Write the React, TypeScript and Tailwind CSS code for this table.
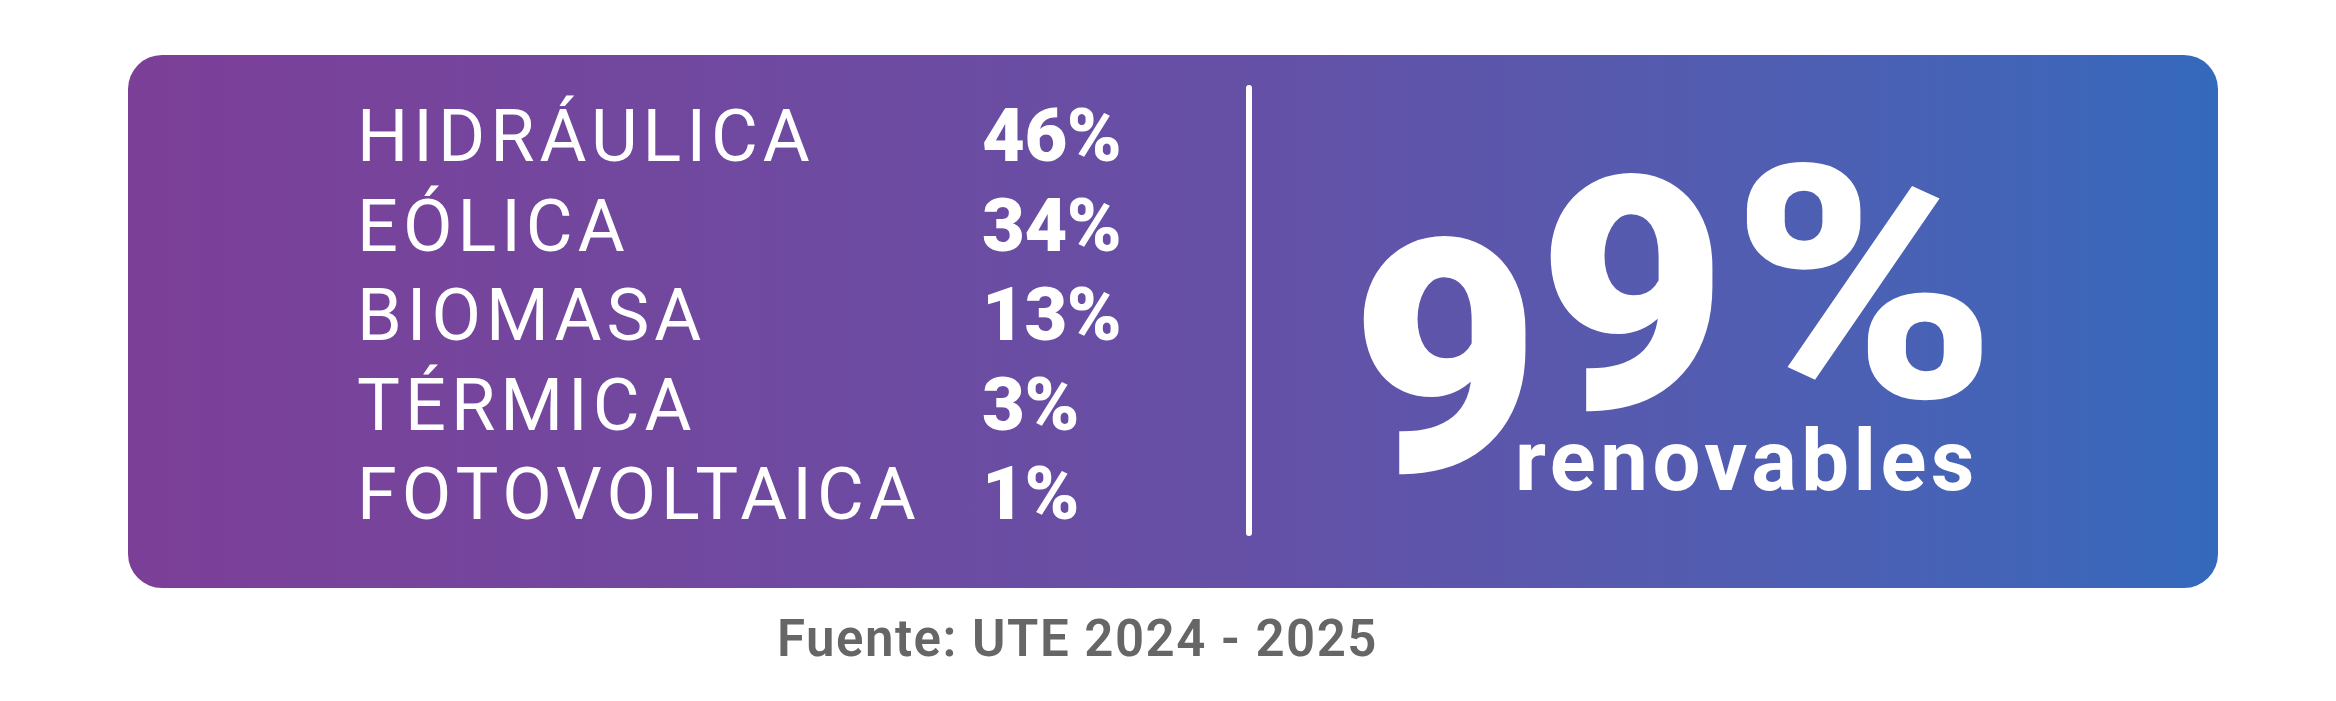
import React from 'react';

interface Row {
    label: string;
    value: string;
}

const rows: Row[] = [
    { label: 'HIDRÁULICA', value: '46%' },
    { label: 'EÓLICA', value: '34%' },
    { label: 'BIOMASA', value: '13%' },
    { label: 'TÉRMICA', value: '3%' },
    { label: 'FOTOVOLTAICA', value: '1%' },
];

const App: React.FC = () => {
    return (
        <div className="w-[2336px] h-[701px] bg-white pt-[55px] pl-[128px] font-['Roboto','Liberation_Sans',sans-serif]">
            {/* Card */}
            <div className="w-[2090px] h-[533px] rounded-[34px] bg-linear-to-r from-[#7c3f98] via-[#6450a6] via-[54%] to-[#3469bc] flex text-white">
                {/* Breakdown list */}
                <div className="w-[1118px] shrink-0 pl-[229px] pt-[36px]">
                    {rows.map((row) => (
                        <div key={row.label} className="flex items-baseline h-[89.6px] leading-[89.6px]">
                            <span className="w-[625px] shrink-0 text-[72px] font-normal tracking-[5px]">
                                {row.label}
                            </span>
                            <span className="text-[74px] font-black tracking-[-0.5px]">
                                {row.value}
                            </span>
                        </div>
                    ))}
                </div>

                {/* Divider */}
                <div className="w-[6px] h-[451px] mt-[30px] shrink-0 rounded-full bg-white" />

                {/* Total */}
                <div className="flex flex-col pl-[99px] pt-[142px]">
                    <div className="flex text-[326px] leading-none font-black tracking-[-2px]">
                        <span>9</span>
                        <span className="-translate-y-[63px]">9</span>
                        <span className="ml-[6px] -translate-y-[74px] scale-x-[1.1] origin-left">%</span>
                    </div>
                    <div className="-mt-[104px] ml-[164px] text-[85px] leading-none font-bold tracking-[4.5px]">
                        renovables
                    </div>
                </div>
            </div>

            {/* Source */}
            <div className="mt-[25px] pl-[649px] text-[51px] leading-none font-semibold tracking-[1.5px] text-[#666666]">
                Fuente: UTE 2024 - 2025
            </div>
        </div>
    );
};

export default App;
